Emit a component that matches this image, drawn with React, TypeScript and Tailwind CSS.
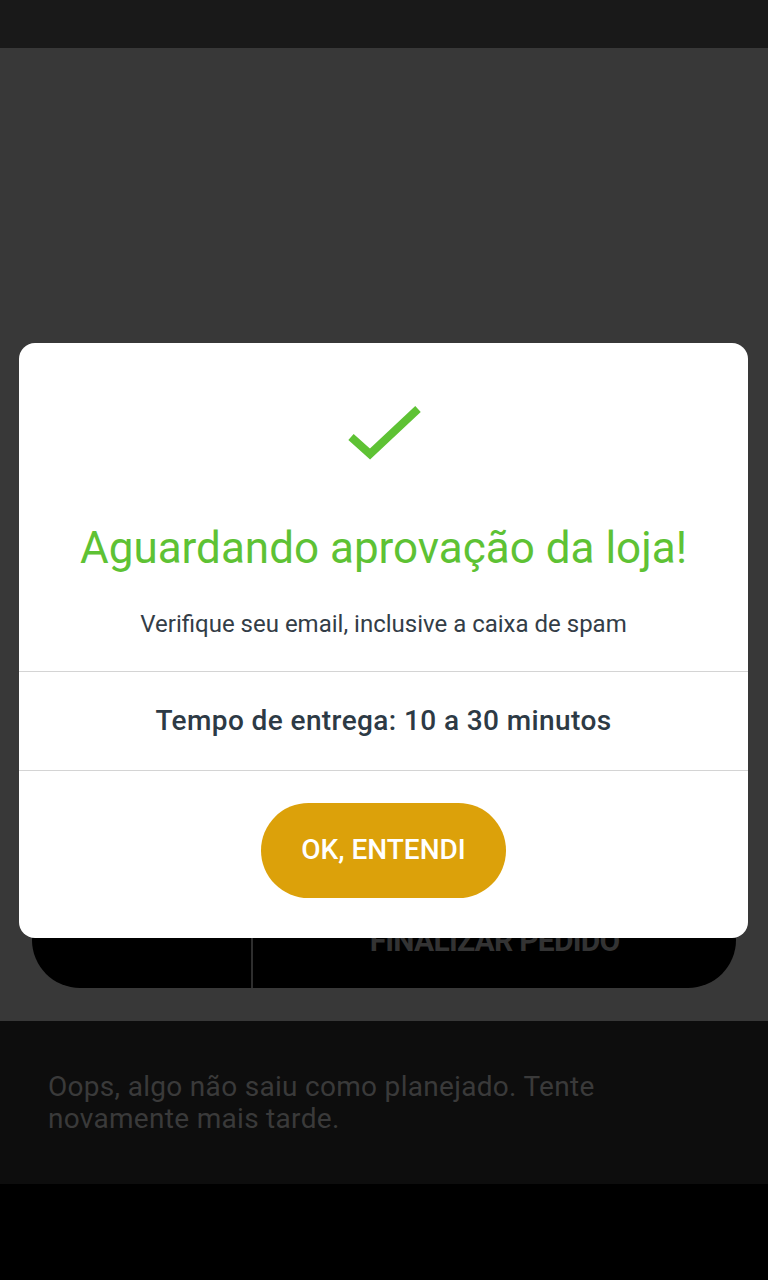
export default function App() {
  return (
    <div className="relative flex h-[1280px] w-[768px] flex-col overflow-hidden bg-black font-['Roboto',sans-serif]">
      {/* status / top bar */}
      <div className="h-12 shrink-0 bg-[#191919]" />

      {/* dimmed page behind the dialog */}
      <div className="flex h-[973px] shrink-0 flex-col justify-end bg-[#383838] px-8 pb-[33px]">
        <div className="flex h-24 items-stretch overflow-hidden rounded-full bg-black">
          <div className="w-[221px] border-r-2 border-[#2e2e2e]" />
          <div className="flex flex-1 items-center justify-center text-[30px] font-bold tracking-tight text-[#333333]">
            FINALIZAR PEDIDO
          </div>
        </div>
      </div>

      {/* snackbar */}
      <div className="flex h-[163px] shrink-0 items-center bg-[#0d0d0d] px-12">
        <p className="text-[28px] leading-8 tracking-[0.3px] text-[#3a3a3a]">
          Oops, algo não saiu como planejado. Tente
          <br />
          novamente mais tarde.
        </p>
      </div>

      {/* dialog */}
      <div className="absolute inset-0 flex items-center justify-center">
        <div className="ml-[-1px] flex w-[729px] flex-col items-center rounded-2xl bg-white">
          <svg width="90" height="66" viewBox="0 0 90 66" className="mt-[57px]">
            <polyline
              points="12,37 31,54 79,9"
              fill="none"
              stroke="#5ec234"
              strokeWidth="8"
              strokeLinejoin="miter"
            />
          </svg>
          <h1 className="mt-[56px] text-[44px] leading-[52px] text-[#5ec234]">Aguardando aprovação da loja!</h1>
          <p className="mt-9 pb-[33px] text-[24px] leading-7 text-[#333d47]">Verifique seu email, inclusive a caixa de spam</p>
          <div className="flex h-[100px] w-full items-center justify-center border-y border-[#d4d4d4] text-[28px] font-medium tracking-[0.4px] text-[#2d3a45]">
            Tempo de entrega: 10 a 30 minutos
          </div>
          <button className="mt-8 mb-10 h-[95px] w-[245px] rounded-full bg-[#dca10a] text-[28px] font-medium text-white">
            OK, ENTENDI
          </button>
        </div>
      </div>
    </div>
  )
}
